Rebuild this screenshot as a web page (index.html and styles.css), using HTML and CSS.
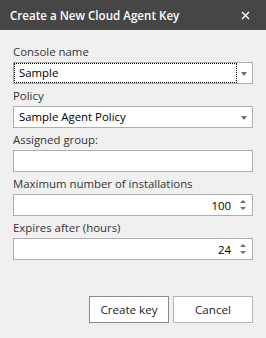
FILE: index.html
```html
<!DOCTYPE html>
<html lang="en">
<head>
  <meta charset="UTF-8">
  <title>Create a New Cloud Agent Key</title>
  <link rel="stylesheet" href="styles.css">
</head>
<body>
  <div class="dialog">
    <div class="title-bar">
      <span class="title">Create a New Cloud Agent Key</span>
      <svg class="close" width="9" height="9" viewBox="0 0 9 9"><path d="M1 1L8 8M8 1L1 8" stroke="#fff" stroke-width="1.4"/></svg>
    </div>
    <div class="form">
      <div class="field">
        <label class="field-label">Console name</label>
        <div class="box combo">
          <span class="value focused">Sample</span>
          <span class="arrow"></span>
        </div>
      </div>
      <div class="field">
        <label class="field-label">Policy</label>
        <div class="box combo">
          <span class="value">Sample Agent Policy</span>
          <span class="arrow"></span>
        </div>
      </div>
      <div class="field">
        <label class="field-label">Assigned group:</label>
        <div class="box"></div>
      </div>
      <div class="field">
        <label class="field-label">Maximum number of installations</label>
        <div class="box spin">
          <span class="number">100</span>
          <span class="spinner"><span class="up"></span><span class="down"></span></span>
        </div>
      </div>
      <div class="field">
        <label class="field-label">Expires after (hours)</label>
        <div class="box spin">
          <span class="number">24</span>
          <span class="spinner"><span class="up"></span><span class="down"></span></span>
        </div>
      </div>
      <div class="buttons">
        <button class="btn default">Create key</button>
        <button class="btn">Cancel</button>
      </div>
    </div>
  </div>
</body>
</html>
```
FILE: styles.css
```css
body { margin: 0; background: #f0f0f0; font-family: "Open Sans", "Noto Sans", sans-serif; font-size: 11.4px; color: #333; }
.dialog { width: 266px; height: 338px; }
.title-bar { height: 30px; background: #464646; display: flex; align-items: center; justify-content: space-between; padding: 0 16px 0 10px; box-sizing: border-box; }
.title { color: #fff; font-weight: 600; font-size: 11.6px; }
.form { padding: 10px 13px 0 13px; }
.field-label { display: block; height: 22px; line-height: 22px; padding-top: 1px; box-sizing: border-box; color: #333; }
.box { height: 22px; box-sizing: border-box; border: 1px solid #adadad; background: #fff; display: flex; align-items: center; }
.value { color: #000; padding: 0 4px; margin-left: 1px; height: 18px; line-height: 18px; flex: 1; }
.value.focused { outline: 1px dotted #000; outline-offset: 0; }
.arrow { width: 0; height: 0; border-left: 3.5px solid transparent; border-right: 3.5px solid transparent; border-top: 4px solid #707070; margin: 2px 5px 0 5px; }
.spin { justify-content: flex-end; }
.number { color: #000; margin-right: 9px; }
.spinner { display: flex; flex-direction: column; gap: 4px; margin-right: 6px; }
.up, .down { width: 0; height: 0; border-left: 3px solid transparent; border-right: 3px solid transparent; }
.up { border-bottom: 3px solid #707070; }
.down { border-top: 3px solid #707070; }
.buttons { display: flex; justify-content: flex-end; gap: 4px; margin-top: 36px; }
.btn { width: 80px; height: 27px; background: #fff; border: 1px solid #b4b4b4; font-family: inherit; font-size: 11.6px; color: #222; padding: 0; }
.btn.default { border-color: #8a8a8a; }
```
